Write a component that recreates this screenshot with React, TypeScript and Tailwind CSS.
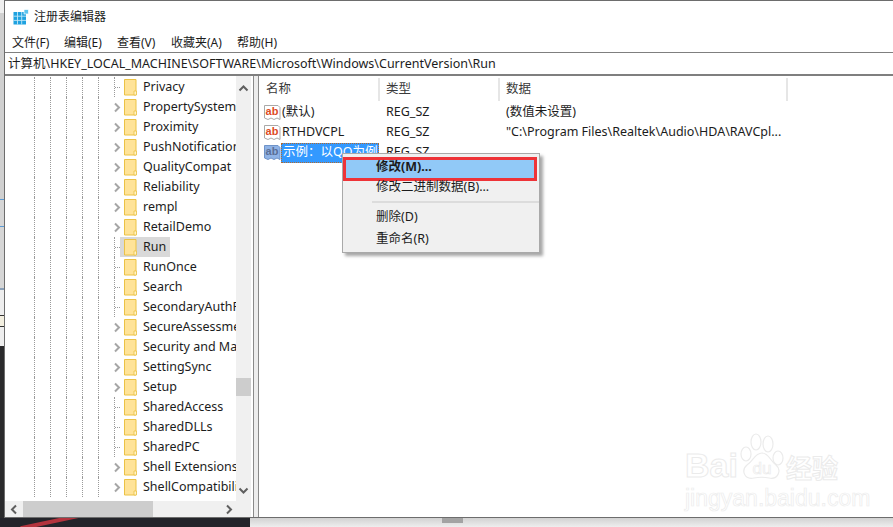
const uiFont = { fontFamily: '"Noto Sans", "Noto Sans CJK SC", sans-serif' };

const treeItems = [
  { name: "Privacy" },
  { name: "PropertySystem", sub: true },
  { name: "Proximity", sub: true },
  { name: "PushNotifications", sub: true },
  { name: "QualityCompat", sub: true },
  { name: "Reliability", sub: true },
  { name: "rempl", sub: true },
  { name: "RetailDemo", sub: true },
  { name: "Run", active: true },
  { name: "RunOnce" },
  { name: "Search" },
  { name: "SecondaryAuthFactor" },
  { name: "SecureAssessment", sub: true },
  { name: "Security and Maintenance", sub: true },
  { name: "SettingSync", sub: true },
  { name: "Setup", sub: true },
  { name: "SharedAccess" },
  { name: "SharedDLLs" },
  { name: "SharedPC" },
  { name: "Shell Extensions", sub: true },
  { name: "ShellCompatibility", sub: true },
];

const menus = ["文件(F)", "编辑(E)", "查看(V)", "收藏夹(A)", "帮助(H)"];

const AppIcon = () => (
  <svg width="16" height="16" viewBox="0 0 16 16" className="shrink-0">
    <rect x="0.5" y="3" width="12.5" height="12.5" fill="#1fa2e0" />
    <path d="M4.5 3v12.5M8.7 3v12.5M0.5 7.2h12.5M0.5 11.4h12.5" stroke="#bfe6f7" strokeWidth="0.9" />
    <rect x="11" y="0.5" width="4.5" height="4.5" fill="#5cc4ee" stroke="#fff" strokeWidth="0.7" />
  </svg>
);

const Folder = () => (
  <svg width="13" height="17" viewBox="0 0 13 17" className="shrink-0">
    <path d="M0.5 0.5h11.5v15.5H0.5z" fill="#ffe398" stroke="#ebc245" />
    <path d="M10 16v-4h2.500V16z" fill="#fff3c8" stroke="#ebc245" strokeWidth="0.8" />
  </svg>
);

const Chevron = ({ dir = "right", color = "#a6a6a6" }: { dir?: "right" | "left" | "up" | "down"; color?: string }) => {
  const d = {
    right: "M3 1.500 7 5.500 3 9.500",
    left: "M7 1.500 3 5.500 7 9.500",
    up: "M1.500 7.500 5.500 3.500 9.500 7.500",
    down: "M1.500 3.500 5.500 7.500 9.500 3.500",
  }[dir];
  return (
    <svg width="11" height="11" viewBox="0 0 11 11" className="shrink-0">
      <path d={d} fill="none" stroke={color} strokeWidth="2" />
    </svg>
  );
};

const RegIcon = ({ selected }: { selected?: boolean }) => (
  <svg width="17" height="17" viewBox="0 0 17 17" className="shrink-0">
    <path
      d="M0.500 1.500h13.500l2 2v12l-3-1.500-3 1.500-3-1.500-3 1.500-3.500-1.500z"
      fill={selected ? "#8fb3e6" : "#fff"}
      stroke={selected ? "#6f93c8" : "#a9a9a9"}
    />
    <text
      x="8"
      y="11"
      textAnchor="middle"
      fontSize="11"
      fontWeight="700"
      fill={selected ? "#5b6f96" : "#dd4b25"}
      fontFamily="Liberation Sans, sans-serif"
    >
      ab
    </text>
  </svg>
);

const TreeRow = ({ name, sub, active }: { name: string; sub?: boolean; active?: boolean }) => (
  <div className="flex h-5 shrink-0 items-stretch">
    <div className="w-[29px] shrink-0" />
    <div className="w-4 shrink-0 border-l border-dotted border-[#9a9a9a]" />
    <div className="w-4 shrink-0 border-l border-dotted border-[#9a9a9a]" />
    <div className="w-4 shrink-0 border-l border-dotted border-[#9a9a9a]" />
    <div className="w-4 shrink-0 border-l border-dotted border-[#9a9a9a]" />
    <div className="w-4 shrink-0 border-l border-dotted border-[#9a9a9a]" />
    {sub ? (
      <div className="flex w-[6px] shrink-0 items-center justify-center">
        <Chevron />
      </div>
    ) : (
      <div className="flex w-[6px] shrink-0 items-center border-l border-dotted border-[#9a9a9a]">
        <div className="h-0 w-[5px] border-t border-dotted border-[#9a9a9a]" />
      </div>
    )}
    <div className={`flex items-center gap-[6px] whitespace-nowrap pl-[4px] pr-[4px] ${active ? "bg-[#d9d9d9]" : ""}`}>
      <Folder />
      <span className="text-[12.500px] text-[#1c1c1c]">{name}</span>
    </div>
  </div>
);

const ColHead = ({ label, className }: { label: string; className: string }) => (
  <div className={`flex h-[23px] items-center border-r-2 border-[#e6e6e6] text-[12.500px] text-[#3a3a3a] ${className}`}>{label}</div>
);

const ListRow = ({ name, type, data }: { name: string; type: string; data: string }) => (
  <div className="flex h-5 items-center text-[12.500px] text-[#1c1c1c]">
    <div className="flex w-[120px] items-center gap-[1px] pl-[5px]">
      <RegIcon />
      <span className="whitespace-nowrap">{name}</span>
    </div>
    <div className="w-[120px] pl-[7px]">{type}</div>
    <div className="pl-[7px] whitespace-nowrap">{data}</div>
  </div>
);

const ContextMenu = () => (
  <div className="absolute left-[337px] top-[152px] w-[198px] border border-[#a9a9a9] bg-[#f0f0f0] pb-[2px] pt-[3px] text-[12.500px] text-[#1c1c1c] shadow-[3px_3px_3px_rgba(0,0,0,0.35)]">
    <div className="mr-[2px] flex h-[24px] items-center border-[3px] border-[#ee3338] bg-[#91c9f7] pb-[4px] pl-[30px] font-bold">修改(M)...</div>
    <div className="flex h-[12px] items-center pl-[33px]">修改二进制数据(B)...</div>
    <div className="ml-[29px] mt-[8px] h-[2px] bg-[#dcdcdc]" />
    <div className="mt-[3px] flex h-[22px] items-center pl-[33px]">删除(D)</div>
    <div className="flex h-[22px] items-center pl-[33px]">重命名(R)</div>
  </div>
);

const Watermark = () => (
  <div className="pointer-events-none absolute left-[680px] top-[431px] flex w-[165px] flex-col">
    <div className="flex items-end">
      <span className="w-[53px] text-[34px] font-bold leading-[38px] text-transparent [-webkit-text-stroke:1px_#ebebeb]" style={{ fontFamily: '"Liberation Sans", sans-serif' }}>
        Bai
      </span>
      <svg width="48" height="52" viewBox="0 0 48 52" className="shrink-0">
        <g fill="none" stroke="#ebebeb" strokeWidth="1.200">
          <ellipse cx="18" cy="10" rx="5" ry="8" />
          <ellipse cx="30" cy="12" rx="5" ry="8" />
          <ellipse cx="8" cy="22" rx="5" ry="7" />
          <ellipse cx="40" cy="26" rx="5" ry="7" />
          <path d="M24 21c7 0 8 8 14 12 6 5 2 15-7 13-5-1-10-1-15 0-10 2-13-8-7-13 6-4 8-12 15-12z" />
        </g>
        <text x="24" y="42" textAnchor="middle" fontSize="17" fill="none" stroke="#ebebeb" strokeWidth="0.7" fontFamily="Liberation Sans, sans-serif">
          du
        </text>
      </svg>
      <span className="text-[26px] font-bold leading-[32px] text-transparent [-webkit-text-stroke:1px_#ebebeb]">经验</span>
    </div>
    <span className="mt-[4px] whitespace-nowrap text-[23px] leading-[20px] text-transparent [-webkit-text-stroke:0.7px_#ececec]" style={{ fontFamily: '"Liberation Sans", sans-serif' }}>
      jingyan.baidu.com
    </span>
  </div>
);

export default function App() {
  return (
    <div className="flex h-[527px] w-[893px] flex-col overflow-hidden bg-white" style={uiFont}>
      <div className="flex h-[518px] shrink-0">
        {/* desktop behind the window, left side */}
        <div className="flex w-[4px] shrink-0 flex-col bg-[#d6d6d6]">
          <div className="h-[13px] bg-[#eeeeee]" />
          <div className="h-[186px] bg-[#d0d0d0]" />
          <div className="h-[1px] bg-[#5b9bd5]" />
          <div className="h-[26px]" />
          <div className="h-[1px] bg-[#5b9bd5]" />
          <div className="h-[61px]" />
          <div className="h-[2px] bg-[#8aa0b8]" />
          <div className="h-[25px] bg-[#eeeeee]" />
          <div className="h-[12px] border-y border-[#333] bg-[#f3efe0]" />
          <div className="h-[19px] bg-[#eeeeee]" />
          <div className="flex-1 bg-[#2a2a2c]" />
        </div>

        <div className="relative flex min-w-0 flex-1 flex-col border-y border-l border-[#6d6d6d] bg-white">
          <div className="flex h-[31px] shrink-0 items-center gap-[5px] pl-[8px] pt-[1px] text-[12px] text-[#1c1c1c]">
            <AppIcon />
            <span>注册表编辑器</span>
          </div>
          <div className="flex h-[20px] shrink-0 items-center pt-[2px] text-[12px] text-[#1c1c1c]">
            <span className="ml-[7px] w-[52px]">{menus[0]}</span>
            <span className="w-[53px]">{menus[1]}</span>
            <span className="w-[54px]">{menus[2]}</span>
            <span className="w-[66px]">{menus[3]}</span>
            <span>{menus[4]}</span>
          </div>
          <div className="flex h-[23px] shrink-0 items-center border-y border-[#7f7f7f] pl-[3px] pt-[1px] text-[12.500px] text-[#1c1c1c]">
            计算机\HKEY_LOCAL_MACHINE\SOFTWARE\Microsoft\Windows\CurrentVersion\Run
          </div>

          <div className="flex min-h-0 flex-1 border-t border-[#7f7f7f]">
            {/* key tree */}
            <div className="flex w-[246px] shrink-0 flex-col">
              <div className="flex min-h-0 flex-1">
                <div className="flex min-w-0 flex-1 flex-col overflow-hidden pt-[1px]">
                  {treeItems.map((item) => (
                    <TreeRow key={item.name} name={item.name} sub={item.sub} active={item.active} />
                  ))}
                </div>
                <div className="flex w-[15px] shrink-0 flex-col bg-[#f0f0f0]">
                  <div className="flex h-[24px] items-center justify-center">
                    <Chevron dir="up" color="#5f5f5f" />
                  </div>
                  <div className="flex flex-1 flex-col">
                    <div className="h-[278px]" />
                    <div className="h-[18px] bg-[#cdcdcd]" />
                    <div className="flex-1" />
                  </div>
                  <div className="flex h-[22px] items-center justify-center">
                    <Chevron dir="down" color="#5f5f5f" />
                  </div>
                </div>
              </div>
              <div className="flex h-[16px] shrink-0 bg-[#f0f0f0]">
                <div className="flex w-[18px] items-center justify-center">
                  <Chevron dir="left" color="#5f5f5f" />
                </div>
                <div className="w-[130px] bg-[#cdcdcd]" />
                <div className="flex flex-1 items-center justify-end pr-[16px]">
                  <Chevron dir="right" color="#5f5f5f" />
                </div>
              </div>
            </div>

            {/* splitter */}
            <div className="ml-[2px] w-[1px] shrink-0 bg-[#8a8a8a]" />
            <div className="w-[4px] shrink-0 bg-[#ededed]" />
            <div className="w-[1px] shrink-0 bg-[#8a8a8a]" />

            {/* values */}
            <div className="flex min-w-0 flex-1 flex-col">
              <div className="flex shrink-0 pt-[2px]">
                <ColHead label="名称" className="w-[121px] pl-[7px]" />
                <ColHead label="类型" className="w-[120px] pl-[6px]" />
                <ColHead label="数据" className="w-[288px] pl-[6px]" />
              </div>
              <div className="pt-[1px]">
                <ListRow name="(默认)" type="REG_SZ" data="(数值未设置)" />
                <ListRow name="RTHDVCPL" type="REG_SZ" data={'"C:\\Program Files\\Realtek\\Audio\\HDA\\RAVCpl...'} />
                <div className="flex h-5 items-center text-[12.500px] text-[#1c1c1c]">
                  <div className="flex w-[120px] items-center pl-[5px]">
                    <RegIcon selected />
                    <span className="mt-[2px] flex h-[20px] w-[98px] items-center overflow-hidden whitespace-nowrap border border-dotted border-[#b06a30] bg-[#3399ff] pb-[2px] pl-[1px] text-white">
                      示例：以QQ为例
                    </span>
                  </div>
                  <div className="pl-[7px]">REG_SZ</div>
                </div>
              </div>
            </div>
          </div>

          <ContextMenu />
          <Watermark />
        </div>
      </div>

      {/* desktop below the window */}
      <div className="flex min-h-0 flex-1">
        <div className="relative w-[250px] overflow-hidden bg-[#23242a]">
          <div className="absolute left-[20px] top-[2px] h-[4px] w-[60px] -rotate-12 bg-[#b3333d]" />
        </div>
        <div className="flex flex-1 bg-gradient-to-b from-[#d2d2d2] to-[#eeeeee]">
          <div className="ml-[192px] h-[5px] w-[21px] bg-[#a3a3a3]" />
        </div>
      </div>
    </div>
  );
}
